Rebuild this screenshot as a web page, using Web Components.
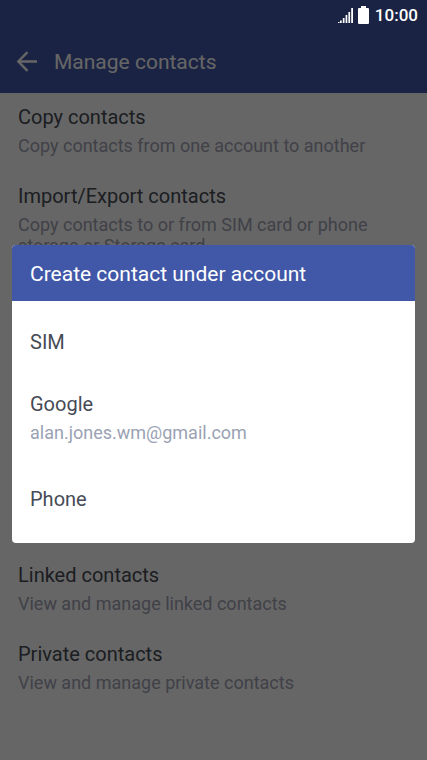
<!DOCTYPE html>
<html lang="en">
<head>
<meta charset="UTF-8">
<meta name="viewport" content="width=device-width, initial-scale=1">
<title>Manage contacts</title>
<style>
    body {
        margin: 0;
        font-family: Roboto, "Noto Sans", sans-serif;
    }
</style>
</head>
<body>
<contacts-screen>
    <status-bar slot="status" time="10:00"></status-bar>
    <app-header slot="header">Manage contacts</app-header>
    <settings-group>
        <settings-item label="Copy contacts">Copy contacts from one account to another</settings-item>
        <settings-item label="Import/Export contacts">Copy contacts to or from SIM card or phone storage or Storage card</settings-item>
    </settings-group>
    <settings-group>
        <settings-item label="Linked contacts">View and manage linked contacts</settings-item>
        <settings-item label="Private contacts">View and manage private contacts</settings-item>
    </settings-group>
    <account-dialog slot="dialog" heading="Create contact under account">
        <account-option label="SIM"></account-option>
        <account-option label="Google" detail="alan.jones.wm@gmail.com"></account-option>
        <account-option label="Phone"></account-option>
    </account-dialog>
</contacts-screen>

<script>
class ContactsScreen extends HTMLElement {
    constructor() {
        super();
        this.attachShadow({ mode: 'open' });
        this.shadowRoot.innerHTML = `
            <style>
                :host {
                    display: flex;
                    flex-direction: column;
                    position: relative;
                    min-height: 100vh;
                    background-color: #fff;
                }
                main {
                    flex: 1;
                    display: flex;
                    flex-direction: column;
                    justify-content: space-between;
                    padding-bottom: 51px;
                }
                .scrim {
                    position: absolute;
                    inset: 0;
                    display: flex;
                    align-items: center;
                    box-sizing: border-box;
                    padding: 32px 12px 4px;
                    background-color: rgba(0, 0, 0, 0.6);
                }
            </style>
            <slot name="status"></slot>
            <slot name="header"></slot>
            <main><slot></slot></main>
            <div class="scrim"><slot name="dialog"></slot></div>
        `;
    }
}

class StatusBar extends HTMLElement {
    constructor() {
        super();
        this.attachShadow({ mode: 'open' });
    }

    connectedCallback() {
        const time = this.getAttribute('time') || '';

        this.shadowRoot.innerHTML = `
            <style>
                :host {
                    display: flex;
                    justify-content: flex-end;
                    align-items: center;
                    gap: 4px;
                    position: relative;
                    z-index: 1;
                    height: 30px;
                    padding-right: 9px;
                    background-color: #1a2343;
                    color: #fff;
                    font-size: 17px;
                    font-weight: 500;
                }
                time {
                    margin-left: 2px;
                }
            </style>
            <svg width="16" height="16" viewBox="0 0 16 16" fill="#fff" aria-hidden="true">
                <path d="M0 15h1.500v1H0zM2 13.500h1.700V16H2zM4.800 11h1.700v5H4.800zM7.600 8h1.700v8H7.600zM10.400 5h1.700v11h-1.700zM13.200 1h1.800v15h-1.800z"/>
            </svg>
            <svg width="11" height="18" viewBox="0 0 11 18" fill="#fff" aria-hidden="true">
                <path d="M3 0h5v2h2a1 1 0 0 1 1 1v14a1 1 0 0 1-1 1H1a1 1 0 0 1-1-1V3a1 1 0 0 1 1-1h2z"/>
            </svg>
            <time>${time}</time>
        `;
    }
}

class AppHeader extends HTMLElement {
    constructor() {
        super();
        this.attachShadow({ mode: 'open' });
        this.shadowRoot.innerHTML = `
            <style>
                :host {
                    display: flex;
                    align-items: center;
                    gap: 16px;
                    height: 63px;
                    padding: 0 16px;
                    background-color: #4158a8;
                    color: #fff;
                }
                button {
                    display: flex;
                    padding: 0;
                    border: 0;
                    background: none;
                    color: inherit;
                }
                h1 {
                    margin: 0;
                    font-size: 21px;
                    font-weight: 400;
                    line-height: 26px;
                }
            </style>
            <button type="button" aria-label="Back">
                <svg width="22" height="22" viewBox="0 0 22 22" fill="none" stroke="currentColor" stroke-width="2.400">
                    <path d="M11.500 1.200 2.300 10.500 11.500 19.800M2.300 10.500H21"/>
                </svg>
            </button>
            <h1><slot></slot></h1>
        `;
    }
}

class SettingsGroup extends HTMLElement {
    constructor() {
        super();
        this.attachShadow({ mode: 'open' });
        this.shadowRoot.innerHTML = `
            <style>
                :host {
                    display: block;
                }
            </style>
            <slot></slot>
        `;
    }
}

class SettingsItem extends HTMLElement {
    constructor() {
        super();
        this.attachShadow({ mode: 'open' });
    }

    connectedCallback() {
        const label = this.getAttribute('label') || '';

        this.shadowRoot.innerHTML = `
            <style>
                :host {
                    display: block;
                    padding: 12px 18px 16px;
                }
                .label {
                    color: #464b55;
                    font-size: 20px;
                    line-height: 24px;
                }
                .detail {
                    margin-top: 6px;
                    color: #a2a3b4;
                    font-size: 18px;
                    line-height: 21px;
                }
            </style>
            <div class="label">${label}</div>
            <div class="detail"><slot></slot></div>
        `;
    }
}

class AccountDialog extends HTMLElement {
    constructor() {
        super();
        this.attachShadow({ mode: 'open' });
    }

    connectedCallback() {
        const heading = this.getAttribute('heading') || '';

        this.setAttribute('role', 'dialog');
        this.setAttribute('aria-label', heading);
        this.shadowRoot.innerHTML = `
            <style>
                :host {
                    display: block;
                    flex: 1;
                    overflow: hidden;
                    border-radius: 4px;
                    background-color: #fff;
                }
                h2 {
                    margin: 0;
                    padding: 16px 18px 14px;
                    background-color: #4158a8;
                    color: #fff;
                    font-size: 21px;
                    font-weight: 400;
                    line-height: 26px;
                }
                .options {
                    padding: 10px 0 13px;
                }
            </style>
            <h2>${heading}</h2>
            <div class="options"><slot></slot></div>
        `;
    }
}

class AccountOption extends HTMLElement {
    constructor() {
        super();
        this.attachShadow({ mode: 'open' });
    }

    connectedCallback() {
        const label = this.getAttribute('label') || '';
        const detail = this.getAttribute('detail');

        this.shadowRoot.innerHTML = `
            <style>
                :host {
                    display: block;
                }
                button {
                    display: block;
                    width: 100%;
                    padding: 19px 18px;
                    border: 0;
                    background: none;
                    font-family: inherit;
                    text-align: left;
                }
                .label, .detail {
                    display: block;
                }
                .label {
                    color: #464b55;
                    font-size: 20px;
                    line-height: 24px;
                }
                .detail {
                    margin: 6px 0;
                    color: #9aa2b4;
                    font-size: 18px;
                    line-height: 21px;
                }
            </style>
            <button type="button">
                <span class="label">${label}</span>
                ${detail ? `<span class="detail">${detail}</span>` : ''}
            </button>
        `;
    }
}

customElements.define('contacts-screen', ContactsScreen);
customElements.define('status-bar', StatusBar);
customElements.define('app-header', AppHeader);
customElements.define('settings-group', SettingsGroup);
customElements.define('settings-item', SettingsItem);
customElements.define('account-dialog', AccountDialog);
customElements.define('account-option', AccountOption);
</script>
</body>
</html>
